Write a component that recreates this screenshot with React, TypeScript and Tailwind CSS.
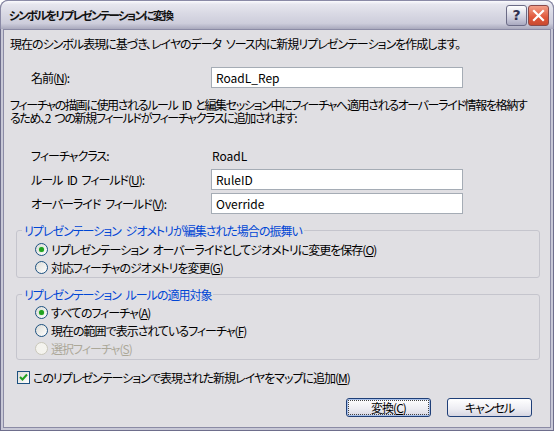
import React from "react";

const FONT = { fontFamily: '"Noto Sans CJK JP", "Noto Sans", sans-serif' };

function Radio({ checked, disabled, label }: { checked?: boolean; disabled?: boolean; label: React.ReactNode }) {
  return (
    <div className="flex items-center h-[18px]">
      <div
        className={
          "w-[13px] h-[13px] rounded-full border flex items-center justify-center " +
          (disabled ? "border-[#c9c7ba] bg-[#f4f3ee]" : "border-[#1c5180] bg-gradient-to-br from-[#dcdcd7] to-[#ffffff]")
        }
      >
        {checked && <div className="w-[5px] h-[5px] rounded-full bg-[#21a121] shadow-[0_0_1px_#55d655]" />}
      </div>
      <span className={"ml-[3px] " + (disabled ? "text-[#aca899]" : "text-black")}>{label}</span>
    </div>
  );
}

function Input({ value }: { value: string }) {
  return (
    <div className="w-[252px] h-[21px] bg-white border border-[#a5acb5] flex items-center px-[4px] text-[12px] tracking-normal [word-spacing:0px] text-black">
      {value}
    </div>
  );
}

export default function App() {
  return (
    <div className="w-[554px] h-[431px] flex flex-col bg-[#6e6e8c] rounded-t-[8px] overflow-hidden text-[12px] leading-[13px] tracking-[-1px] [word-spacing:3px]" style={{ ...FONT, fontFeatureSettings: '"palt"' }}>
      {/* Title bar */}
      <div className="h-[29px] shrink-0 flex items-center pl-[8px] pr-[4px] rounded-t-[8px] bg-[linear-gradient(to_bottom,#fbfbfe_0%,#e6e6ee_12%,#d9d9e4_45%,#cdcddb_80%,#a9a9bd_100%)] border-t border-x border-[#8a8aa6]">
        <span className="font-bold text-[11.5px] text-[#111] tracking-[-1.7px]">シンボルをリプレゼンテーションに変換</span>
        <div className="ml-auto flex gap-[1px] mt-[1px]">
          <div className="w-[21px] h-[21px] rounded-[3px] border border-[#6b6b86] bg-[linear-gradient(to_bottom,#ffffff,#c7c7d8_70%,#a9a9c0)] flex items-center justify-center text-[#303050] font-bold text-[14px] tracking-normal" style={{ fontFamily: '"DejaVu Sans", sans-serif' }}>?</div>
          <div className="w-[21px] h-[21px] rounded-[3px] border border-[#8a4a4a] bg-[linear-gradient(to_bottom,#f2a08a,#e0573a_60%,#c94a30)] flex items-center justify-center">
            <svg width="13" height="13" viewBox="0 0 13 13">
              <path d="M2 2 L11 11 M11 2 L2 11" stroke="white" strokeWidth="2.2" strokeLinecap="square" />
            </svg>
          </div>
        </div>
      </div>
      {/* Frame */}
      <div className="flex-1 bg-[#c8c8d6] px-[2px] pb-[2px] border-x border-b border-[#6e6e8c]">
        <div className="h-full bg-[#e0dfe3] border border-[#8b8ba5] flex flex-col pl-[6px] pr-[16px] pt-[7px] text-black">
          <div className="whitespace-nowrap h-[13px]">現在のシンボル表現に基づき、レイヤのデータ ソース内に新規リプレゼンテーションを作成します。</div>

          <div className="flex items-center mt-[17px] pl-[21px]">
            <div className="w-[180px]">名前(<u>N</u>):</div>
            <Input value="RoadL_Rep" />
          </div>

          <div className="mt-[10px] whitespace-nowrap tracking-[-1.35px]">
            フィーチャの描画に使用されるルール ID と編集セッション中にフィーチャへ適用されるオーバーライド情報を格納す
            <br />
            るため、2 つの新規フィールドがフィーチャクラスに追加されます:
          </div>

          <div className="flex flex-col gap-[3px] mt-[21px] pl-[21px]">
            <div className="flex items-center h-[21px]">
              <div className="w-[181px]">フィーチャクラス:</div>
              <div className="tracking-normal">RoadL</div>
            </div>
            <div className="flex items-center">
              <div className="w-[180px]">ルール ID フィールド(<u>U</u>):</div>
              <Input value="RuleID" />
            </div>
            <div className="flex items-center">
              <div className="w-[180px]">オーバーライド フィールド(<u>V</u>):</div>
              <Input value="Override" />
            </div>
          </div>

          <fieldset className="mt-[10px] ml-[6px] w-[524px] border border-[#c5c5cd] rounded-[3px] pl-[18px] pb-[1px]">
            <legend className="ml-[-13px] px-[2px] text-[#0046d5]">リプレゼンテーション ジオメトリが編集された場合の振舞い</legend>
            <div className="mt-[3px] flex flex-col">
              <Radio checked label={<>リプレゼンテーション オーバーライドとしてジオメトリに変更を保存(<u>O</u>)</>} />
              <Radio label={<>対応フィーチャのジオメトリを変更(<u>G</u>)</>} />
            </div>
          </fieldset>

          <fieldset className="mt-[10px] ml-[6px] w-[524px] border border-[#c5c5cd] rounded-[3px] pl-[18px] pb-[2px]">
            <legend className="ml-[-13px] px-[2px] text-[#0046d5]">リプレゼンテーション ルールの適用対象</legend>
            <div className="mt-[2px] flex flex-col">
              <Radio checked label={<>すべてのフィーチャ(<u>A</u>)</>} />
              <Radio label={<>現在の範囲で表示されているフィーチャ(<u>F</u>)</>} />
              <Radio disabled label={<>選択フィーチャ(<u>S</u>)</>} />
            </div>
          </fieldset>

          <div className="flex items-center mt-[9px] ml-[7px] h-[16px]">
            <div className="w-[13px] h-[13px] border border-[#1c5180] bg-gradient-to-br from-[#dcdcd7] to-[#ffffff] flex items-center justify-center">
              <svg width="9" height="9" viewBox="0 0 9 9">
                <path d="M1 4 L3.5 6.5 L8 1.5" stroke="#21a121" strokeWidth="2" fill="none" />
              </svg>
            </div>
            <span className="ml-[3px]">このリプレゼンテーションで表現された新規レイヤをマップに追加(<u>M</u>)</span>
          </div>

          <div className="flex justify-end gap-[16px] mt-[13px] mr-[2px]">
            <div className="w-[85px] h-[19px] rounded-[3px] border border-[#1f3f78] bg-[linear-gradient(to_bottom,#ffffff,#ececf2_60%,#d6d6e2)] p-[1px] shadow-[inset_0_0_0_1px_#a8c0ea]">
              <div className="w-full h-full border border-dotted border-[#444] flex items-center justify-center">変換(<u>C</u>)</div>
            </div>
            <div className="w-[85px] h-[19px] rounded-[3px] border border-[#1f3f78] bg-[linear-gradient(to_bottom,#ffffff,#ececf2_60%,#d6d6e2)] flex items-center justify-center">
              キャンセル
            </div>
          </div>
        </div>
      </div>
    </div>
  );
}
